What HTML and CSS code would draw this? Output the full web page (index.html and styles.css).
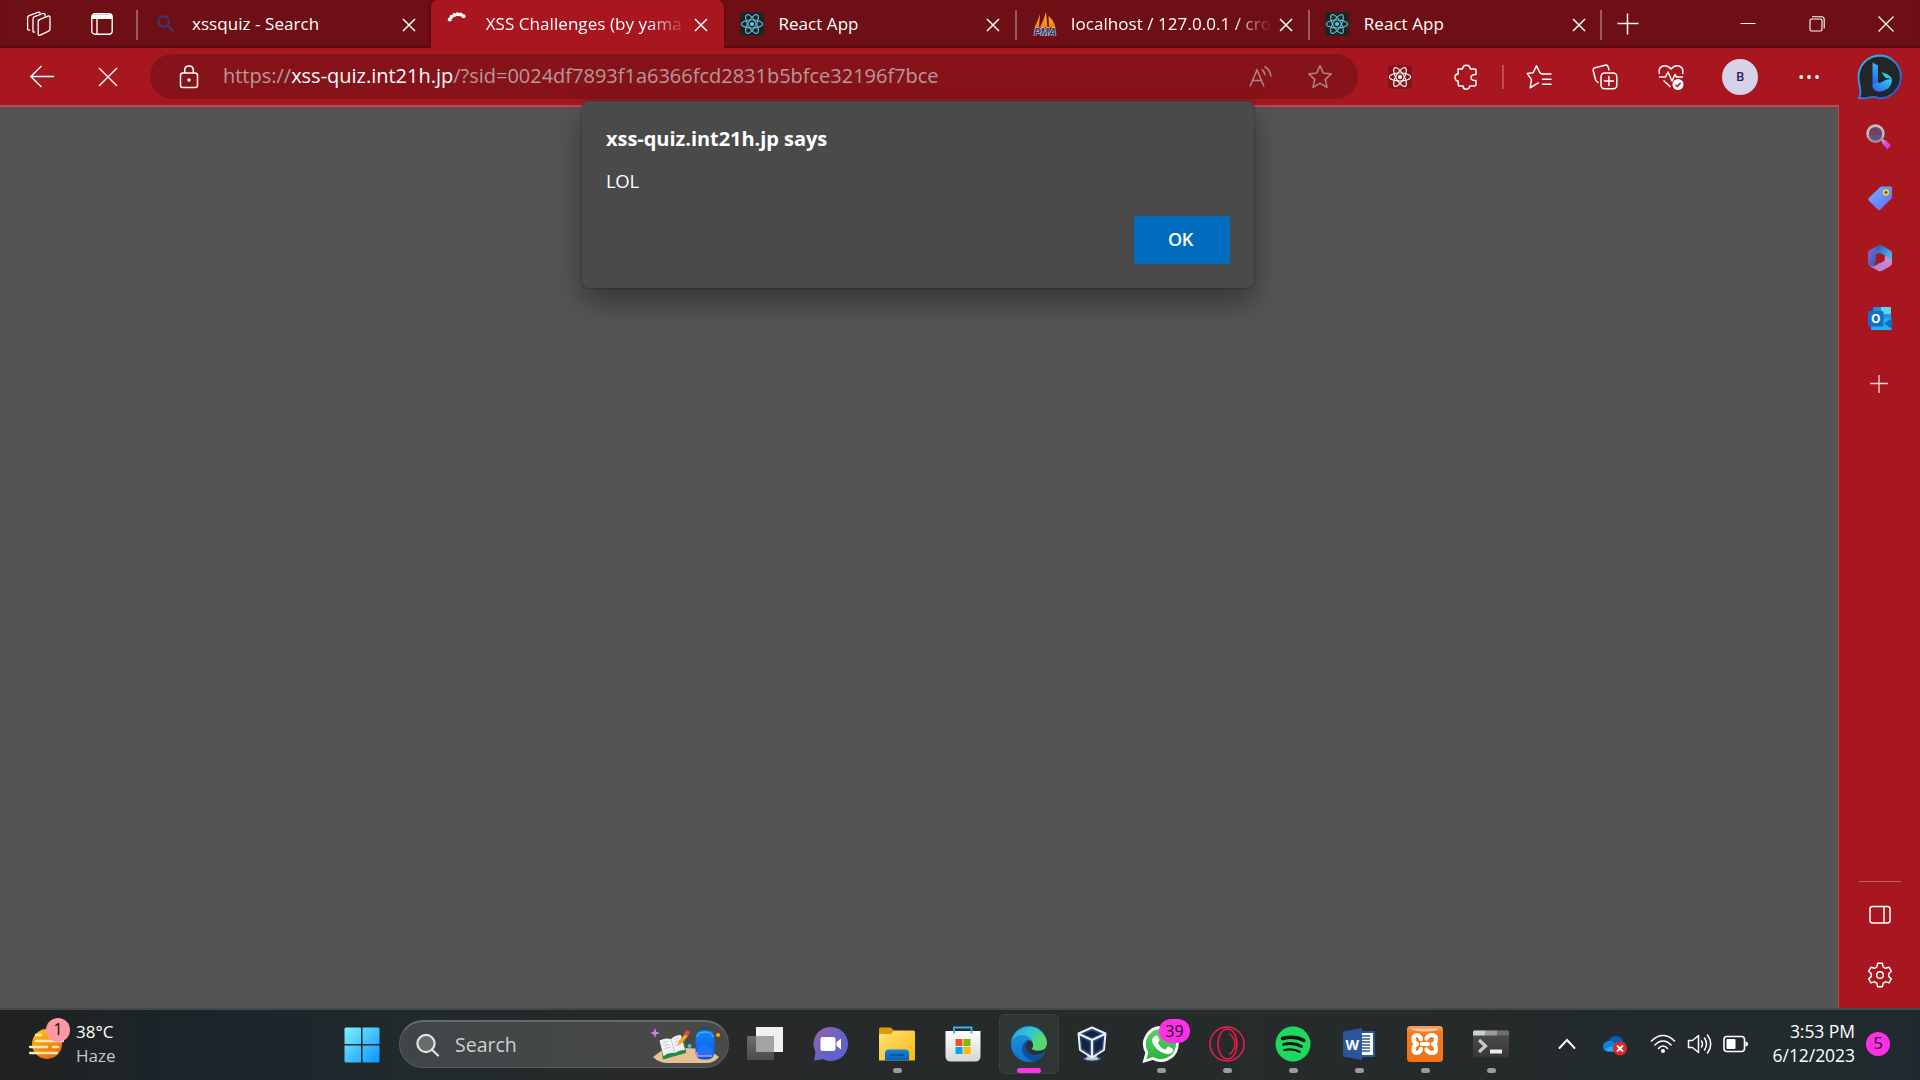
FILE: index.html
```
<!DOCTYPE html>
<html lang="en">
<head>
<meta charset="utf-8">
<title>XSS Challenges</title>
<link rel="stylesheet" href="styles.css">
</head>
<body>
<svg class="defs" width="0" height="0" aria-hidden="true">
  <defs>
    <symbol id="close" viewBox="0 0 14 14"><path d="M1 1l12 12M13 1L1 13" fill="none" stroke="#fff" stroke-width="1.5"/></symbol>
    <symbol id="atom" viewBox="0 0 24 24">
      <g fill="none" stroke="currentColor" stroke-width="1.1">
        <ellipse cx="12" cy="12" rx="10.6" ry="4"/>
        <ellipse cx="12" cy="12" rx="10.6" ry="4" transform="rotate(60 12 12)"/>
        <ellipse cx="12" cy="12" rx="10.6" ry="4" transform="rotate(120 12 12)"/>
      </g>
      <circle cx="12" cy="12" r="2.1" fill="currentColor"/>
    </symbol>
    <linearGradient id="gWin" x1="0" y1="0" x2="1" y2="1"><stop offset="0" stop-color="#7df3ff"/><stop offset="1" stop-color="#0a92ff"/></linearGradient>
    <linearGradient id="gBubble" x1="0" y1="0" x2="1" y2="1"><stop offset="0" stop-color="#2cc8f0"/><stop offset="1" stop-color="#1b50e6"/></linearGradient>
    <linearGradient id="gBing" x1="0" y1="0" x2="0" y2="1"><stop offset="0" stop-color="#38b6f8"/><stop offset="1" stop-color="#2450e0"/></linearGradient>
    <linearGradient id="gBing2" x1="0" y1="1" x2="1" y2="0"><stop offset="0" stop-color="#2b62ee"/><stop offset="1" stop-color="#2fd0f5"/></linearGradient>
    <linearGradient id="gTag" x1="0" y1="0" x2="1" y2="1"><stop offset="0" stop-color="#6fb4ff"/><stop offset="1" stop-color="#6468f6"/></linearGradient>
    <linearGradient id="gChat" x1="0" y1="0" x2="1" y2="1"><stop offset="0" stop-color="#9a62a8"/><stop offset=".5" stop-color="#6a62c4"/><stop offset="1" stop-color="#5560d8"/></linearGradient>
    <linearGradient id="gFolder" x1="0" y1="0" x2="1" y2="1"><stop offset="0" stop-color="#ffe07a"/><stop offset="1" stop-color="#fbb90c"/></linearGradient>
    <linearGradient id="gFolderB" x1="0" y1="0" x2="0" y2="1"><stop offset="0" stop-color="#1482d8"/><stop offset="1" stop-color="#0b62b4"/></linearGradient>
    <linearGradient id="gStore" x1="0" y1="0" x2="0" y2="1"><stop offset="0" stop-color="#fff"/><stop offset="1" stop-color="#d6d6d6"/></linearGradient>
    <linearGradient id="gEdgeTop" x1="0" y1="0" x2="1" y2=".4"><stop offset="0" stop-color="#2aa6d6"/><stop offset=".5" stop-color="#2fc3d4"/><stop offset="1" stop-color="#63dd5c"/></linearGradient>
    <linearGradient id="gEdgeL" x1="0" y1="0" x2="0" y2="1"><stop offset="0" stop-color="#1c98de"/><stop offset="1" stop-color="#0d74cf"/></linearGradient>
    <linearGradient id="gWa" x1="0" y1="0" x2="0" y2="1"><stop offset="0" stop-color="#5bd066"/><stop offset="1" stop-color="#27b43e"/></linearGradient>
    <linearGradient id="gXa" x1="0" y1="0" x2="0" y2="1"><stop offset="0" stop-color="#f9a060"/><stop offset=".18" stop-color="#f47a20"/><stop offset="1" stop-color="#f07318"/></linearGradient>
    <linearGradient id="gTerm" x1="0" y1="0" x2="0" y2="1"><stop offset="0" stop-color="#4e4e4e"/><stop offset="1" stop-color="#3a3637"/></linearGradient>
    <linearGradient id="gSun" x1="0" y1="0" x2=".5" y2="1"><stop offset="0" stop-color="#ffcc18"/><stop offset="1" stop-color="#ef6c0c"/></linearGradient>
    <linearGradient id="gPack" x1="0" y1="0" x2="0" y2="1"><stop offset="0" stop-color="#1586ff"/><stop offset="1" stop-color="#0a55d8"/></linearGradient>
    <linearGradient id="gSail" x1="0" y1="0" x2="0" y2="1"><stop offset="0" stop-color="#ffb43c"/><stop offset="1" stop-color="#f27d10"/></linearGradient>
    <linearGradient id="gTv" x1="0" y1="0" x2="0" y2="1"><stop offset="0" stop-color="#6d6d6d"/><stop offset="1" stop-color="#4b4b4b"/></linearGradient>
    <linearGradient id="gMA" x1="0" y1="0" x2="1" y2="1"><stop offset="0" stop-color="#8f6fd6"/><stop offset="1" stop-color="#2450b4"/></linearGradient>
    <linearGradient id="gMB" x1="0" y1="0" x2="1" y2="1"><stop offset="0" stop-color="#2a55bc"/><stop offset="1" stop-color="#4fd0f2"/></linearGradient>
    <linearGradient id="gMC" x1="0" y1="1" x2="1" y2="0"><stop offset="0" stop-color="#b07ad8"/><stop offset="1" stop-color="#d08fd4"/></linearGradient>
    <linearGradient id="gHandle" x1="0" y1="0" x2="1" y2="1"><stop offset="0" stop-color="#f45af4"/><stop offset="1" stop-color="#b032ea"/></linearGradient>
  </defs>
</svg>

<header class="tabstrip">
  <div class="strip-btn workspaces">
    <svg width="28" height="26" viewBox="0 0 28 26" fill="none" stroke="#fff" stroke-width="1.3" stroke-linejoin="round" stroke-linecap="round">
      <path d="M13.2 9.200l9.800-4q2-.7 2 1.200v11.800q0 1.400-1.300 2l-8.600 4q-1.900.8-1.900-1.100V11q0-1.300 1-1.700z"/>
      <path d="M20 5V3.500q-.3-1.500-2-1L9.600 5.700Q8 6.300 8 8v12.500q0 1 1.500.5"/>
      <path d="M15 3V2q-.4-1.300-2-.7L4 4.700Q2.600 5.300 2.600 7v11q0 1.500 2 1"/>
    </svg>
  </div>
  <div class="strip-btn">
    <svg width="22" height="22" viewBox="0 0 22 22" fill="none" stroke="#fff" stroke-width="1.400"><rect x=".8" y=".8" width="20.400" height="20.400" rx="3.200"/><path d="M1 1.500h20V6H1z" fill="#fff" stroke="none"/><path d="M6 6v15"/></svg>
  </div>
  <div class="tabs">
    <div class="tab first">
      <svg class="favicon" viewBox="0 0 24 24" fill="none" stroke="#3f3566" stroke-width="2.300"><circle cx="8.500" cy="9.500" r="5.300"/><path d="M12.500 13.500l5.800 5.800" stroke-linecap="round"/></svg>
      <span class="tab-title">xssquiz - Search</span><svg class="x"><use href="#close"/></svg>
    </div>
    <div class="tab active">
      <svg class="favicon" viewBox="0 0 24 24" fill="#fff"><circle cx="2.700" cy="7.500" r="2"/><circle cx="4.600" cy="4.800" r="2"/><circle cx="7.300" cy="3" r="2"/><circle cx="10.500" cy="2.200" r="2"/><circle cx="13.700" cy="2.600" r="2"/><circle cx="16.600" cy="4.200" r="2"/></svg>
      <span class="tab-title fade">XSS Challenges (by yama</span><svg class="x"><use href="#close"/></svg>
    </div>
    <div class="tab">
      <svg class="favicon react"><use href="#atom"/></svg>
      <span class="tab-title">React App</span><svg class="x"><use href="#close"/></svg>
    </div>
    <div class="tab">
      <svg class="favicon" viewBox="0 0 24 24"><path d="M7 2L6 15H1.500Q5 9 7 2zM13 0l1.500 15.500H6.800Q11 8 13 0zM15.500 4q6 5 7 11.500h-6.500z" fill="url(#gSail)"/><text x="12" y="23.500" text-anchor="middle" class="pma">PMA</text></svg>
      <span class="tab-title fade">localhost / 127.0.0.1 / cro</span><svg class="x"><use href="#close"/></svg>
    </div>
    <div class="tab">
      <svg class="favicon react"><use href="#atom"/></svg>
      <span class="tab-title">React App</span><svg class="x"><use href="#close"/></svg>
    </div>
  </div>
  <div class="new-tab"><svg width="22" height="22" viewBox="0 0 22 22" stroke="#fff" stroke-width="1.500"><path d="M.5 10.500h21M10.500 .5v21"/></svg></div>
  <div class="window-controls">
    <div><svg width="16" height="16" viewBox="0 0 16 16" stroke="#fff"><path d="M.5 7.500h15"/></svg></div>
    <div><svg width="16" height="16" viewBox="0 0 16 16" fill="none" stroke="#fff" stroke-width="1.100"><rect x="1" y="3" width="12" height="12" rx="1.500"/><path d="M3 .8h9.500q2.700 0 2.700 2.700V12.500"/></svg></div>
    <div><svg width="16" height="16" viewBox="0 0 16 16" stroke="#fff" stroke-width="1.200"><path d="M.5.5l15 15M15.500.5l-15 15"/></svg></div>
  </div>
</header>

<nav class="toolbar">
  <div class="tool"><svg width="26" height="24" viewBox="0 0 26 24" fill="none" stroke="#fff" stroke-width="1.400"><path d="M25 11.500H2M12.500 1L1.800 11.500l10.700 10.500"/></svg></div>
  <div class="tool"><svg width="20" height="20" viewBox="0 0 20 20" stroke="#fff" stroke-width="1.400"><path d="M1 1l18 18M19 1L1 19"/></svg></div>
  <div class="address">
    <svg class="lock" width="20" height="24" viewBox="0 0 20 24" fill="none" stroke="#fff" stroke-width="1.500"><rect x="1.500" y="8" width="17" height="14.500" rx="2.300"/><path d="M5.700 8V5.300Q5.700 1 10 1t4.300 4.300V8"/><circle cx="10" cy="15" r="1.700" fill="#fff" stroke="none"/></svg>
    <span class="url">https://<b>xss-quiz.int21h.jp</b>/?sid=0024df7893f1a6366fcd2831b5bfce32196f7bce</span>
    <svg class="aloud" width="24" height="24" viewBox="0 0 24 24" fill="none" stroke="#b0858a" stroke-width="1.500"><path d="M1 21.500L8 5l7 16.500M3.500 15.500h9"/><path d="M12.700 4.300q3 2 3.300 6M15.500 1.500q6 3.500 6.500 10"/></svg>
    <svg class="fav" width="26" height="26" viewBox="0 0 26 26" fill="none" stroke="#b0858a" stroke-width="1.500" stroke-linejoin="round"><path d="M13 1.800l3.300 7.300 8 .9-6 5.400 1.700 7.900-7-4-7 4 1.700-7.900-6-5.400 8-.9z"/></svg>
  </div>
  <div class="tool ext"><svg width="24" height="24" class="ext-atom"><use href="#atom"/></svg></div>
  <div class="tool"><svg width="24" height="26" viewBox="0 0 24 26" fill="none" stroke="#fff" stroke-width="1.500" stroke-linejoin="round"><path d="M4 5h4.500Q9 1.200 12.400 1.200T16.300 5H21q1 0 1 1v4.500q-5-.2-5 3t5 3V20q0 2-1.500 2h-4.700q-.5 3.200-3.600 3.200T9 22H6q-1.800 0-1.800-1.800V17Q1 16.700 1 13.400T4.200 10z"/></svg></div>
  <div class="tool-divider"></div>
  <div class="tool"><svg width="26" height="26" viewBox="0 0 26 26" fill="none" stroke="#fff" stroke-width="1.500" stroke-linejoin="round" stroke-linecap="round"><path d="M16 10l-2-1.200-3.500-7-3.500 7-5.700.8 4.200 6-1.300 8.200 6.300-4 2-.8M16.500 10H25M16.500 15.200H25M16.500 20.200H25"/></svg></div>
  <div class="tool"><svg width="26" height="26" viewBox="0 0 26 26" fill="none" stroke="#fff" stroke-width="1.500" stroke-linejoin="round" stroke-linecap="round"><rect x="9" y="9" width="15.800" height="15.800" rx="3.500"/><path d="M16.900 12.500v9M12.400 17h9M6 18.500Q3.800 17 3.300 14.800L1.200 6.700Q.8 4.500 3 3.800L13 1.200q2.500-.5 3.200 1.700l.8 3"/></svg></div>
  <div class="tool"><svg width="26" height="26" viewBox="0 0 26 26" fill="none" stroke="#fff" stroke-width="1.500" stroke-linejoin="round"><path d="M1.500 10Q0 3.500 5 2q4.500-1.200 8 3 3.500-4.200 8-3 5 1.500 3.600 8"/><path d="M1 13h6.500l2.500-5 4 9 3-6.500 1.500 2.500H25M5.500 16.500l7 6.500"/><circle cx="20" cy="20.500" r="5.500" fill="#fff" stroke="none"/><path d="M17.500 20.700l1.800 1.800 3.300-3.800" stroke="#a81720"/></svg></div>
  <div class="tool profile"><span class="avatar">B</span></div>
  <div class="tool"><svg width="20" height="6" viewBox="0 0 20 6" fill="#fff"><circle cx="2.200" cy="3" r="1.900"/><circle cx="10" cy="3" r="1.900"/><circle cx="18" cy="3" r="1.900"/></svg></div>
  <div class="tool bing">
    <svg width="46" height="46" viewBox="0 0 46 46"><path d="M23 1.500a21.300 21.300 0 1 1-1 42.700Q17 42 12 43.500 7 45 2 44q2.500-4 .8-11.500Q1.500 27 1.500 23.500A21.500 21.500 0 0 1 23 1.500z" fill="#222628" stroke="url(#gBubble)" stroke-width="1.800"/><path d="M15.500 8.500l5.500 3v17l-5.500 6.500z" fill="url(#gBing)"/><path d="M15.500 31l5.500-3 1.500 1.200 7-3.700q5-.7 5.500.5-.5 5.500-4 8.500-8 5-13 2-2.500-2-2.500-5.500z" fill="url(#gBing2)"/><path d="M24.500 18l6 2.500q4.500 2.500 4.500 6-2-2.500-7-3z" fill="#20d6d2"/></svg>
  </div>
</nav>

<main class="workspace">
  <section class="page"></section>
  <aside class="sidebar">
    <div class="side search"><svg width="26" height="26" viewBox="0 0 26 26"><path d="M15.500 18.500l4-2.500 5.500 5.500-3.500 4z" fill="url(#gHandle)"/><circle cx="9.500" cy="9.500" r="7.900" fill="#754062" stroke="#c4bdb9" stroke-width="2.600"/><path d="M15 15l3.500 3" stroke="#aaa5a5" stroke-width="2.600"/><path d="M2.500 11a7 7 0 0 0 14 0" fill="#5a5694" opacity=".6"/></svg></div>
    <div class="side"><svg width="26" height="26" viewBox="0 0 26 26"><path d="M15 1.500h8.500Q25 1.500 25 3v9q0 1-.8 1.800L13.500 24.400q-1.500 1.200-2.800 0L1.800 15.600q-1.300-1.300 0-2.700L13 2.300q.9-.8 2-.8z" fill="url(#gTag)"/><circle cx="19" cy="7.500" r="2.300" fill="none" stroke="#f8d812" stroke-width="1.800"/><circle cx="19" cy="7.500" r="1.300" fill="#57462c"/></svg></div>
    <div class="side"><svg width="26" height="28" viewBox="0 0 26 28"><path d="M11 1.500L2.300 6.500Q1 7.500 1 9v10q0 2 1.500 3l4.500.8 2-6.800V6.500Q9 3 11 1.500z" fill="url(#gMA)"/><path d="M11 1.500q2-1.200 4 0l8.500 5Q25 7.500 25 9v8.500q-1.500-2.500-7-6L12 9 9 10.500v-4Q9 3 11 1.500z" fill="url(#gMB)"/><path d="M25 17.500V19q0 2-1.500 3L15 26.700q-2 1-4 0L2.500 22q4 1 7-1l7-4.500 1.500-5q6 3 7 6z" fill="url(#gMC)"/><path d="M9 11.500l4-2.500 4.700 2.500v5L13.500 19 9 16.500z" fill="#a81720"/></svg></div>
    <div class="side"><svg width="26" height="26" viewBox="0 0 26 26"><path d="M6 2q0-1 1-1h16q1 0 1 1v12H6z" fill="#1490df"/><path d="M14 1h9q1 0 1 1v6H14z" fill="#5ed2fa"/><path d="M14 8h10v6H14z" fill="#1a9be0"/><path d="M4 14l21-2v10.500Q25 24 23.500 24H5q-1 0-1-1z" fill="#22b0f0"/><path d="M25 12v11l-8-5.500z" fill="#0f6cbd"/><rect x="1" y="5" width="15.500" height="15.500" rx="1.500" fill="#0f70cc"/><text x="8.700" y="17.200" text-anchor="middle" class="o-letter">O</text></svg></div>
    <div class="side add"><svg width="18" height="18" viewBox="0 0 18 18" stroke="#f1d4d6" stroke-width="1.300"><path d="M0 8.500h18M9 0v18"/></svg></div>
    <div class="side-foot">
      <div class="side"><svg width="22" height="20" viewBox="0 0 22 20" fill="none" stroke="#fff" stroke-width="1.500"><rect x="1" y="1.500" width="20" height="16.500" rx="2.500"/><path d="M15 1.500V18"/></svg></div>
      <div class="side"><svg width="26" height="26" viewBox="0 0 26 26" fill="none" stroke="#fff" stroke-width="1.500" stroke-linejoin="round"><circle cx="13" cy="13" r="3.300"/><path d="M10.700 1.300h4.600l.8 3.600 2.400 1.400 3.500-1.100 2.300 4-2.600 2.500v2.700l2.600 2.500-2.300 4-3.500-1.100-2.400 1.400-.8 3.600h-4.600l-.8-3.600-2.400-1.400-3.500 1.100-2.300-4 2.600-2.500v-2.700L1.700 9.200l2.300-4 3.500 1.100 2.400-1.400z"/></svg></div>
    </div>
  </aside>
</main>

<div class="dialog" role="alertdialog">
  <h1>xss-quiz.int21h.jp says</h1>
  <p>LOL</p>
  <div class="actions"><button>OK</button></div>
</div>

<footer class="taskbar">
  <div class="weather">
    <div class="weather-icon">
      <svg width="36" height="34" viewBox="0 0 36 34"><circle cx="19" cy="16" r="15" fill="url(#gSun)"/><g stroke="#ffe9b0" stroke-width="2.300" stroke-linecap="round"><path d="M8 7h5M8 13h27M2 19h17M25 19h5M2 25h27"/></g></svg>
      <span class="weather-badge">1</span>
    </div>
    <div class="weather-text"><span>38°C</span><span class="dim">Haze</span></div>
  </div>
  <div class="apps">
    <div class="app start"><svg width="36" height="36" viewBox="0 0 36 36" fill="url(#gWin)"><path d="M2 .5h15v16.500H.5V2Q.5.500 2 .5zM18.500.5H34Q35.500.5 35.500 2v15h-17zM.5 18.500H17v17H2Q.5 35.500.5 34zM18.500 18.500h17V34q0 1.500-1.500 1.500H18.500z"/></svg></div>
    <div class="search-box">
      <svg width="24" height="24" viewBox="0 0 24 24" fill="none" stroke="#e4e4e4" stroke-width="2.200"><circle cx="10" cy="10.500" r="8.600" fill="#666b6c"/><path d="M16 16.800l6 5.700" stroke-linecap="round"/></svg>
      <span>Search</span>
      <svg class="art" width="72" height="40" viewBox="0 0 72 40">
        <path d="M2 30l8-6q25-6 50 0l8 6q-5 6-13 6H17q-9 0-15-6z" fill="#e9c190"/>
        <path d="M10 18l24-6 1 14-23 6.500z" fill="#208a48"/><path d="M8.500 13.500q6-3 11.500-1.500 4-4 10-4l4 15q-6 0-10 3-6-1-11.500 3z" fill="#f3f0f7"/><path d="M20 12l4 14M11.500 15.500l6-1.200M12.500 18.500l6-1.200M13.500 21.500l6-1.200M23 12.500l5-2M24 15.500l5-2M25 18.500l5-2" stroke="#b9b3cc" stroke-width=".7" fill="none"/>
        <path d="M26 19l2-5 6-7 3 2-6 7z" fill="#ffa216"/><path d="M33 7l3-4 3 2-2 4z" fill="#f4493a"/>
        <path d="M4 1l1.300 3.700L9 6 5.300 7.300 4 11 2.700 7.300-1 6l3.700-1.300z" fill="#df78ff"/><circle cx="38.500" cy="19" r="2.100" fill="#51bfcd"/><circle cx="67" cy="8" r="2.100" fill="#ffa80a"/>
        <path d="M50 4q0-3 4-3t4 3" fill="none" stroke="#0a4e95" stroke-width="1.600"/><rect x="44.500" y="3.500" width="19" height="29" rx="7" fill="url(#gPack)"/><path d="M46 10q1-5 8-5t8 5" stroke="#4cc3ff" fill="none"/><path d="M46 29V24q1-6 8-6t8 6v5z" fill="#1a74f4"/><path d="M46 25v4h15" stroke="#c78cff" stroke-width="1.700" fill="none"/>
      </svg>
    </div>
    <div class="app"><svg width="36" height="36" viewBox="0 0 36 36"><path d="M9 1h27v25H9z" fill="#f1f1f1"/><rect y="10" width="27" height="24" rx="1" fill="url(#gTv)"/><path d="M9 10h18v16H9z" fill="#a3a3a3"/></svg></div>
    <div class="app"><svg width="36" height="36" viewBox="0 0 36 36"><path d="M18 1a17 17 0 1 1-8 32Q5 34 1 34.500L2.500 26A17 17 0 0 1 18 1z" fill="url(#gChat)"/><rect x="7.500" y="11" width="15" height="14" rx="2" fill="#fff"/><path d="M23.500 16l4.500-3.500v11L23.500 20z" fill="#fff"/></svg></div>
    <div class="app run"><svg width="36" height="36" viewBox="0 0 36 36"><path d="M0 3q0-1.500 1.500-1.500h10L15 4.500V9H0z" fill="#dc9b05"/><path d="M0 8h12l3-3.500h19.500Q36 4.500 36 6v28.500H0z" fill="url(#gFolder)"/><path d="M6 34.500V27q0-3.500 3.500-3.500h17Q30 23.500 30 27v7.500z" fill="url(#gFolderB)"/><path d="M11 29h14" stroke="#0a4a8c" stroke-width="1.500"/></svg></div>
    <div class="app"><svg class="nudge" width="36" height="36" viewBox="0 0 36 36"><path d="M.5 5h35v25q0 5.500-5.500 5.500H6Q.5 35.500.5 30z" fill="url(#gStore)"/><path d="M9 7.500V1.500h17.500v6" fill="none" stroke="#31b5ee" stroke-width="1.800"/><path d="M10.500 13h7v7h-7z" fill="#f25022"/><path d="M18.500 13h7v7h-7z" fill="#7fba00"/><path d="M10.500 21h7v7h-7z" fill="#00a4ef"/><path d="M18.500 21h7v7h-7z" fill="#ffb900"/></svg></div>
    <div class="app run current"><svg width="36" height="36" viewBox="0 0 36 36"><circle cx="18" cy="18" r="18" fill="url(#gEdgeL)"/><path d="M2 11A18 18 0 0 1 36 17q0 7.500-8 7.500-5 0-7-1.500 2-2.500 1-6Q19 9 11 9 5 9 .5 15z" fill="url(#gEdgeTop)"/><path d="M13 17q-4 6 0 12 4.500 6 11 6 6-1.500 9-8-3 2-8 2-9-1-11-9 .5-4 4-6-3 0-5 3z" fill="#104f9e"/><path d="M18 14q-5 4-3 9 3 6 10 6 5 0 9-3l2-4v-5q-2 7.500-8 7.500-5 0-7-1.500 2-2 1-5-1-3-4-4z" fill="#2b3233"/><path d="M36 17q0 7.500-8 7.500-5 0-7-1.500 2-2.500 1-6l6-8z" fill="#55d873"/></svg></div>
    <div class="app vbox"><svg width="32" height="36" viewBox="0 0 32 36" stroke-linejoin="round"><path d="M11 28h10v3l4 2q-9 4-18 0l4-2z" fill="#b9c6dc" stroke="#394d78"/><path d="M16 1.500L29.500 7.500 28 24l-12 7.500L4 24 2.500 7.500z" fill="#2a4674" stroke="#e9eef7" stroke-width="2"/><path d="M3 8l13 6 13-6M16 14v17" fill="none" stroke="#e9eef7" stroke-width="2.300"/><path d="M16 4.500l8 3.500-8 3.500L8 8zM5.500 12l8 4v10.500l-7-4.500zM26.500 12l-8 4v10.500l7-4.500z" fill="#10243f"/></svg></div>
    <div class="app run whatsapp"><svg width="38" height="38" viewBox="0 0 38 38"><path d="M19.500 2.500A16.500 16.500 0 1 1 11 33.500L2.500 36l2.300-8.500A16.500 16.500 0 0 1 19.500 2.500z" fill="url(#gWa)" stroke="#fff" stroke-width="2.800"/><path d="M13.500 10.500q2-.5 2.600 1l1.400 3.300q.2 1-1.700 3.200 3 5 7.500 6.700l2-2.600q.8-.8 1.700-.3l3.500 1.800q.8.500.6 1.500-1 4.500-6 4-8-1-13.500-9-4-5.500 1.900-9.600z" fill="#fff"/></svg><span class="wa-badge">39</span></div>
    <div class="app run"><svg width="36" height="36" viewBox="0 0 36 36" fill="none" stroke="#f01c4b" stroke-width="1.500"><circle cx="18" cy="18" r="17"/><ellipse cx="18.500" cy="18" rx="9.500" ry="15"/><path d="M20 7.500q6 4 6 10.500t-6 10.500"/></svg></div>
    <div class="app run"><svg width="36" height="36" viewBox="0 0 36 36"><circle cx="18" cy="18" r="17.500" fill="#1ed860"/><g fill="none" stroke="#0c110d" stroke-linecap="round"><path d="M7.500 12.500q12-3.300 21.500 2" stroke-width="3.400"/><path d="M8.500 18.500q10-2.700 18 2" stroke-width="2.800"/><path d="M9.500 24q8.500-2 15 1.800" stroke-width="2.300"/></g></svg></div>
    <div class="app run"><svg width="34" height="34" viewBox="0 0 34 34"><path d="M16 5h16v24H16z" fill="#fff" stroke="#2b579a" stroke-width="2"/><path d="M19 9h9M19 12h9M19 15h9M19 18h9M19 21h9M19 24h9" stroke="#2b579a" stroke-width="1.300"/><path d="M1 4.500L20 1v32L1 29.500z" fill="#2b579a"/><text x="10.300" y="22.500" text-anchor="middle" class="w-letter">W</text></svg></div>
    <div class="app run"><svg width="36" height="36" viewBox="0 0 36 36"><rect width="36" height="36" rx="3.500" fill="url(#gXa)"/><path d="M4 2.500h28q-2 3-14 3t-14-3z" fill="#fcc8a0"/><path d="M14 13q-1.500-4-4.500-4-3 .5-3 4T10 18q-3.500 1.500-3.500 5t3 4q3 0 4.500-4M15 18h6M19.500 12.500Q21 9 25 9t4 4.500-3 4.500q3 1 3 5t-4 4q-4 0-5.500-3.500" fill="none" stroke="#fff" stroke-width="4.200" stroke-linecap="round" stroke-linejoin="round"/></svg></div>
    <div class="app run"><svg width="36" height="28" viewBox="0 0 36 28"><rect y=".5" width="36" height="27" rx="1.500" fill="url(#gTerm)"/><path d="M0 5.500V2Q0 .5 1.500.5H12v5z" fill="#cfcfcf"/><path d="M12 .5h12v5H12z" fill="#9c9c9c"/><path d="M24 .5h10.500Q36 .5 36 2v3.500H24z" fill="#6d6d6d"/><path d="M6 10l6.500 6L6 22" fill="none" stroke="#c8c8c8" stroke-width="3.200"/><path d="M17 19.500h12v4H17z" fill="#ededed"/></svg></div>
  </div>
  <div class="tray">
    <svg class="t-chev" width="18" height="12" viewBox="0 0 18 12" fill="none" stroke="#fff" stroke-width="1.900" stroke-linecap="round"><path d="M1.500 10L9 2l7.500 8"/></svg>
    <svg class="t-cloud" width="26" height="22" viewBox="0 0 26 22"><path d="M6 8Q9 1 15 2q5 1 6.500 6 3 1 3 5H8z" fill="#0a5cb8"/><path d="M6 7q3-1 6 1.500l9 7-1 2H6.500Q1 17 1 12.500 1 8 6 7z" fill="#1181dc"/><path d="M3 16q4-5 11-3l4 4.500H7Q4.500 17.500 3 16z" fill="#25a9ee"/><circle cx="18" cy="14.500" r="7" fill="#e0262c"/><path d="M15 11.500l6 6M21 11.500l-6 6" stroke="#fff" stroke-width="1.800"/></svg>
    <svg class="t-wifi" width="26" height="20" viewBox="0 0 26 20" fill="none" stroke="#fff" stroke-width="1.600" stroke-linecap="round"><path d="M1.500 7Q7 1.500 13 1.500T24.500 7M5 11q3.700-4 8-4t8 4M8.500 14.500Q10.500 12 13 12t4.500 2.500"/><circle cx="13" cy="17" r="2" fill="#fff" stroke="none"/></svg>
    <svg class="t-vol" width="26" height="22" viewBox="0 0 26 22" fill="none" stroke="#fff" stroke-width="1.500" stroke-linecap="round" stroke-linejoin="round"><path d="M1.500 7.500h4l6-5v17l-6-5h-4zM14.500 8q2 3 0 6M17.500 5q4 6 0 12M20.500 2q6.500 9 0 18"/></svg>
    <svg class="t-bat" width="26" height="18" viewBox="0 0 26 18" fill="none" stroke="#fff" stroke-width="1.600"><rect x="1" y="1.500" width="20.500" height="15" rx="3"/><rect x="3.500" y="4" width="9" height="10" rx="1" fill="#fff" stroke="none"/><path d="M22.500 6.500q2.500 0 2.500 2.500t-2.500 2.500z" fill="#fff" stroke="none"/></svg>
    <div class="clock"><span>3:53 PM</span><span>6/12/2023</span></div>
    <span class="notif">5</span>
  </div>
</footer>
</body>
</html>
```
FILE: styles.css
```
* { box-sizing: border-box; }
body {
  margin: 0;
  width: 1920px;
  height: 1080px;
  overflow: hidden;
  display: flex;
  flex-direction: column;
  position: relative;
  font-family: "Open Sans", "Noto Sans", sans-serif;
  font-size: 17px;
  color: #fff;
  background: #a81720;
}
svg { display: block; flex: none; }
.defs { position: absolute; }

/* Tab strip */
.tabstrip {
  height: 48px;
  flex: none;
  display: flex;
  align-items: center;
  background: #6d0f15;
  box-shadow: inset 0 -2px 1px #560b11;
}
.strip-btn { width: 60px; display: flex; justify-content: center; }
.workspaces { width: 72px; padding-left: 6px; }
.tabs { display: flex; margin-left: 4px; height: 48px; width: 1466px; }
.tabs::before { content: ""; width: 2px; height: 30px; margin: 10px 0 0 0; background: #9c5b60; }
.tab {
  width: 292.7px;
  flex: none;
  display: flex;
  align-items: center;
  padding: 0 0 0 16.5px;
  position: relative;
}
.tab.first .tab-title { margin-left: 13.5px; margin-right: 1.5px; }
.tab:not(.active):not(.first)::after {
  content: "";
  position: absolute;
  right: -1px;
  top: 10px;
  width: 2px;
  height: 30px;
  background: #9c5b60;
}
.tab.active {
  background: #a81720;
  border-radius: 7px 7px 0 0;
  box-shadow: 1px 0 0 #a81720, 0 0 3px #3f070b;
  clip-path: inset(0 -4px 0 -4px);
}
.favicon { width: 24px; height: 24px; }
.react { background: #222; border-radius: 3px; color: #58c4dc; }
.tab-title {
  margin-left: 14.5px;
  width: 199px;
  letter-spacing: .06px;
  line-height: 24px;
  margin-top: -1px;
  white-space: nowrap;
}
.fade {
  -webkit-mask-image: linear-gradient(90deg, #000 160px, transparent 202px);
  mask-image: linear-gradient(90deg, #000 160px, transparent 202px);
}
.x { width: 14px; height: 14px; margin: 2px 0 0 9px; }
.pma { font: italic 700 10px "Liberation Sans", sans-serif; fill: #28305f; stroke: #d4ccd8; stroke-width: 1.4px; paint-order: stroke; }
.new-tab { width: 52px; display: flex; justify-content: center; }
.window-controls { display: flex; margin-left: 59px; }
.window-controls div { width: 69px; display: flex; justify-content: center; }

/* Toolbar */
.toolbar { height: 57px; flex: none; display: flex; align-items: center; padding-left: 9px; background: #a81720; }
.tool { width: 66px; flex: none; display: flex; justify-content: center; }
.address {
  width: 1208px;
  height: 45px;
  margin: 0 9px;
  padding: 0 25px 0 29px;
  border-radius: 23px;
  background: #86131a;
  display: flex;
  align-items: center;
}
.url { margin: -1px 0 0 24px; flex: 1; font-size: 20px; line-height: 28px; color: #b5999b; letter-spacing: -.01px; white-space: nowrap; }
.url b { font-weight: 400; color: #fff; }
.fav { margin-left: 34px; }
.ext-atom { color: #fff; background: #86131a; border-radius: 3px; }
.tool-divider { width: 2px; height: 24px; margin: 0 2px 0 3px; background: #c04e55; }
.profile { width: 72px; }
.avatar {
  width: 36px;
  height: 36px;
  border-radius: 50%;
  background: #d6d2e7;
  color: #251f52;
  font-size: 12.5px;
  font-weight: 600;
  line-height: 36px;
  text-align: center;
}
.bing { width: 75px; }

/* Page and sidebar */
.workspace { height: 903px; flex: none; display: flex; }
.page { width: 1839px; background: #545454; border-top: 2px solid #b94a51; border-right: 1px solid #b94a51; }
.sidebar { width: 81px; display: flex; flex-direction: column; align-items: center; }
.side { width: 81px; height: 60.5px; flex: none; display: flex; align-items: center; justify-content: center; }
.side.search { margin-top: 2px; padding-right: 1px; }
.side.add { margin-top: 5px; padding-right: 2px; }
.side-foot { margin-top: auto; padding-bottom: 3px; }
.side-foot .side { height: 60px; }
.side-foot::before { content: ""; display: block; width: 42px; height: 1px; margin: 0 auto 3px; background: #c45a60; }
.o-letter { font: 700 12px "Open Sans", sans-serif; fill: #fff; }

/* Alert dialog floats above the page */
.dialog {
  position: absolute;
  left: 582px;
  top: 101px;
  width: 672px;
  height: 187px;
  padding: 24px;
  border-radius: 6px;
  background: #4a4a4a;
  box-shadow: 0 0 2px rgba(0,0,0,.5), 0 14px 28px rgba(0,0,0,.35);
  display: flex;
  flex-direction: column;
}
.dialog h1 { margin: 0; font-size: 20px; line-height: 28px; font-weight: 700; letter-spacing: -.04px; }
.dialog p { margin: 14px 0 0; font-size: 18.5px; line-height: 28px; letter-spacing: -.3px; }
.actions { display: flex; justify-content: flex-end; margin-top: 21px; }
.actions button {
  width: 96px;
  height: 48px;
  border: 0;
  border-radius: 3px;
  background: #006cbe;
  color: #fff;
  font: 600 18px "Open Sans", sans-serif;
  letter-spacing: -.3px;
  padding: 0 3px 2px 0;
}

/* Taskbar */
.taskbar {
  height: 72px;
  flex: none;
  display: flex;
  border-top: 2px solid #424949;
  background: linear-gradient(90deg, #21211f 0, #1e2428 110px, #1b252c 250px, #212a2c 420px, #282a29 640px, #262a2a 1000px, #252b2b 1500px, #202a2e 1920px);
}
.weather { width: 331px; display: flex; align-items: center; padding-left: 28px; }
.weather-icon { position: relative; }
.weather-badge, .notif {
  width: 24px;
  height: 24px;
  border-radius: 50%;
  color: #111;
  font-size: 16px;
  line-height: 22px;
  text-align: center;
}
.weather-badge { position: absolute; left: 18px; top: -10px; line-height: 23px; background: #ff98a5; }
.weather-text { display: flex; flex-direction: column; margin: -2px 0 0 12px; line-height: 24px; }
.weather-text .dim { color: #c6c8c9; }
.apps { display: flex; align-items: center; gap: 6px; width: 1190px; }
.app {
  width: 60px;
  height: 60px;
  margin-top: -2px;
  border: 1px solid transparent;
  border-radius: 6px;
  display: flex;
  align-items: center;
  justify-content: center;
  position: relative;
  flex: none;
}
.start { margin-right: 2px; padding: 2px 0 0 1px; }
.nudge { margin-right: 1px; }
.current { background: #303536; border-color: #3b4041; }
.run::after { content: ""; position: absolute; left: 25px; bottom: 0; width: 9px; height: 5px; border-radius: 3px; background: #999c9c; }
.current::after { left: 17px; width: 24px; background: #ff35ea; }
.vbox { padding-right: 6px; }
.wa-badge { position: absolute; left: 27px; top: 4px; width: 31px; height: 24px; border-radius: 12px; background: #ff2fe8; color: #111; font-size: 16px; line-height: 24px; text-align: center; }
.w-letter { font: 700 14px "Open Sans", sans-serif; fill: #fff; }
.search-box {
  width: 330px;
  height: 48px;
  flex: none;
  margin-top: -2px;
  border: 1px solid #595d5e;
  border-top: 2px solid #686b6c;
  border-radius: 24px;
  background: linear-gradient(90deg, #3f4547, #4a4947);
  display: flex;
  align-items: center;
  padding-left: 16px;
  font-size: 19.5px;
  color: #cfd1d2;
}
.search-box span { margin: -1px 0 0 15px; width: 196px; }
.search-box .art { margin-top: 4px; overflow: visible; }
.tray { display: flex; align-items: center; width: 399px; padding-left: 37px; margin-top: -2px; }
.t-cloud { margin: 2px 0 0 26px; }
.t-wifi { margin-left: 22px; }
.t-vol { margin-left: 11px; }
.t-bat { margin-left: 10px; }
.clock { display: flex; flex-direction: column; width: 106px; margin-top: -2px; line-height: 24px; text-align: right; font-size: 17.5px; letter-spacing: -.05px; }
.notif { margin-left: 11px; background: #ff2fe8; font-size: 17px; }
```
